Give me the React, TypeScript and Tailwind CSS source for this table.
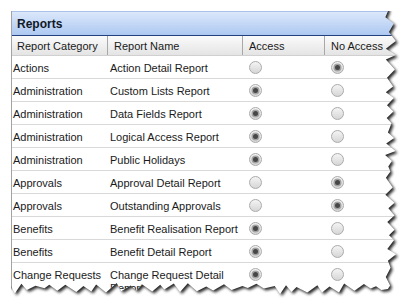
import React from 'react'

type Row = { category: string; name: string; access: boolean }

const rows: Row[] = [
  { category: 'Actions', name: 'Action Detail Report', access: false },
  { category: 'Administration', name: 'Custom Lists Report', access: true },
  { category: 'Administration', name: 'Data Fields Report', access: true },
  { category: 'Administration', name: 'Logical Access Report', access: true },
  { category: 'Administration', name: 'Public Holidays', access: true },
  { category: 'Approvals', name: 'Approval Detail Report', access: false },
  { category: 'Approvals', name: 'Outstanding Approvals', access: false },
  { category: 'Benefits', name: 'Benefit Realisation Report', access: true },
  { category: 'Benefits', name: 'Benefit Detail Report', access: true },
  { category: 'Change Requests', name: 'Change Request Detail Report', access: true },
]

function Radio({ checked }: { checked: boolean }) {
  return (
    <span className="ml-[6px] mt-[5px] w-[13px] h-[13px] rounded-full border border-[#ababab] bg-linear-to-b from-[#f4f4f4] to-[#d6d6d6] flex items-center justify-center">
      {checked && <span className="w-[5px] h-[5px] rounded-full bg-[#474747] shadow-[0_0_0_1.5px_#a3a3a3]" />}
    </span>
  )
}

// pseudo random for the torn paper edge
const rnd = (i: number) => {
  const v = Math.sin(i * 12.9898 + 4.1) * 43758.5453
  return v - Math.floor(v)
}

function buildPaper() {
  const pts: string[] = ['M-40 -40', 'L388 -40', 'L388 11']
  let y = 11
  let i = 0
  while (y < 286) {
    y += 4 + rnd(i) * 6
    const x = i % 2 === 0 ? 385 + rnd(i + 50) * 4 : 390 + rnd(i + 90) * 6
    pts.push(`L${x.toFixed(1)} ${Math.min(y, 289).toFixed(1)}`)
    i++
  }
  let x = 392
  while (x > 11) {
    x -= 4 + rnd(i) * 7
    const yy = i % 2 === 0 ? 283 + rnd(i + 30) * 4 : 288 + rnd(i + 70) * 6
    pts.push(`L${Math.max(x, 11).toFixed(1)} ${yy.toFixed(1)}`)
    i++
  }
  pts.push('L-40 286', 'Z')
  return pts.join(' ')
}

const paper = buildPaper()

function TornEdge() {
  return (
    <svg className="absolute inset-0 pointer-events-none" width={414} height={308}>
      <defs>
        <clipPath id="outside">
          <path clipRule="evenodd" d={`M0 0H414V308H0Z ${paper}`} />
        </clipPath>
        <clipPath id="area">
          <rect x={11} y={11} width={403} height={297} />
        </clipPath>
        <filter id="soft" x="-10%" y="-10%" width="120%" height="120%">
          <feGaussianBlur stdDeviation="1.8" />
        </filter>
      </defs>
      <g clipPath="url(#outside)">
        <rect width={414} height={308} fill="#fff" />
        <g clipPath="url(#area)">
          <path d={paper} fill="#000" opacity={0.85} transform="translate(2 2)" filter="url(#soft)" />
        </g>
      </g>
    </svg>
  )
}

export default function App() {
  return (
    <div className="relative w-[414px] h-[308px] bg-white overflow-hidden pt-[11px] pl-[11px] text-[11px] text-[#1a1a1a] font-['Liberation_Sans',Arial,sans-serif]">
      <div className="w-[403px] border-l border-[#a3a3a3]">
        <div className="h-[25px] border-t border-[#a9c3ea] border-b border-b-[#21427c] bg-linear-to-b from-[#dce8fb] to-[#adc8f1] pl-[5px] pt-[1px] flex items-center">
          <span className="font-bold text-[12px] text-[#101828]">Reports</span>
        </div>
        <div className="grid grid-cols-[96px_135px_82px_1fr] h-[20px] bg-linear-to-b from-[#fbfbfb] to-[#e4e4e4] border-b border-[#d0d0d0]">
          <div className="border-r border-[#a8a8a8] pl-[5px] pt-[2px] flex items-center">Report Category</div>
          <div className="border-r border-[#a8a8a8] pl-[6px] pt-[2px] flex items-center">Report Name</div>
          <div className="border-r border-[#a8a8a8] pl-[6px] pt-[2px] flex items-center">Access</div>
          <div className="pl-[6px] pt-[2px] flex items-center">No Access</div>
        </div>
        {rows.map((r, i) => (
          <div key={i} className="grid grid-cols-[96px_135px_82px_1fr] min-h-[23px] border-b border-[#d9d9d9] items-start leading-[13px]">
            <div className="pl-[1px] pt-[6px]">{r.category}</div>
            <div className="pl-[2px] pt-[6px] pr-[2px]">{r.name}</div>
            <div className="flex"><Radio checked={r.access} /></div>
            <div className="flex"><Radio checked={!r.access} /></div>
          </div>
        ))}
      </div>
      <TornEdge />
    </div>
  )
}
